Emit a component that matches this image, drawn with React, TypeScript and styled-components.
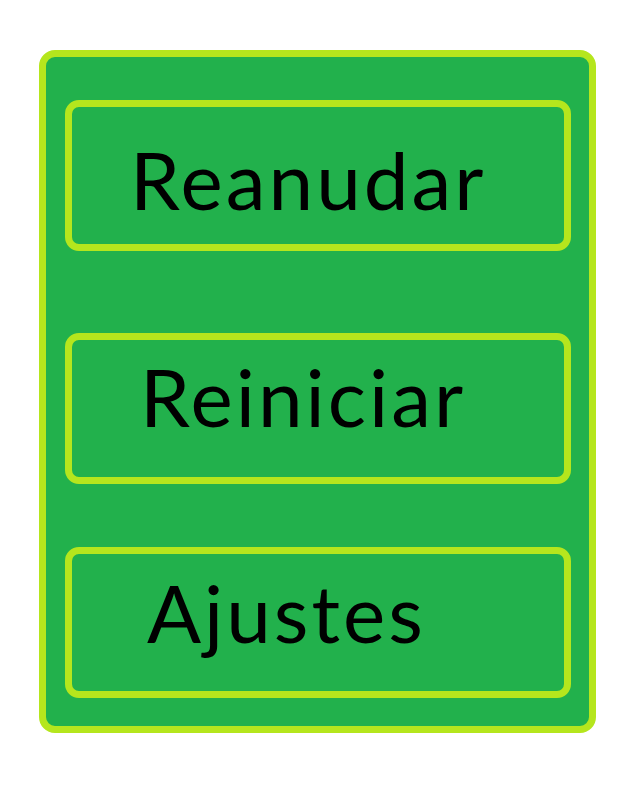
import React from "react";
import styled, { createGlobalStyle } from "styled-components";

const GlobalStyle = createGlobalStyle`
  html, body {
    margin: 0;
    padding: 0;
    background: #ffffff;
  }
  * {
    box-sizing: border-box;
  }
`;

const Page = styled.div`
  width: 628px;
  height: 788px;
  padding: 50px 0 0 39px;
`;

const Panel = styled.div`
  width: 557px;
  height: 683px;
  background: #22b14c;
  border: 7px solid #b5e61d;
  border-radius: 16px;
  padding: 43px 0 0 19px;
  display: flex;
  flex-direction: column;
`;

const MenuButton = styled.div<{ $top: number; $left: number; $up: number; $down: number }>`
  width: 506px;
  height: 151px;
  margin-top: ${(p) => p.$top}px;
  border: 7px solid #b5e61d;
  border-radius: 14px;
  display: flex;
  align-items: center;
  padding-left: ${(p) => p.$left}px;
  padding-top: ${(p) => p.$down}px;
  padding-bottom: ${(p) => p.$up}px;
  font-family: Lato, "Open Sans", sans-serif;
  font-weight: 400;
  font-size: 80px;
  letter-spacing: 3px;
  line-height: 1;
  color: #000000;
`;

const items = [
  { label: "Reanudar", top: 0, left: 58, up: 0, down: 6 },
  { label: "Reiniciar", top: 82, left: 68, up: 26, down: 0 },
  { label: "Ajustes", top: 63, left: 75, up: 22, down: 0 },
];

const App = () => {
  return (
    <Page>
      <GlobalStyle />
      <Panel>
        {items.map((item) => (
          <MenuButton
            key={item.label}
            $top={item.top}
            $left={item.left}
            $up={item.up}
            $down={item.down}
          >
            {item.label}
          </MenuButton>
        ))}
      </Panel>
    </Page>
  );
};

export default App;
